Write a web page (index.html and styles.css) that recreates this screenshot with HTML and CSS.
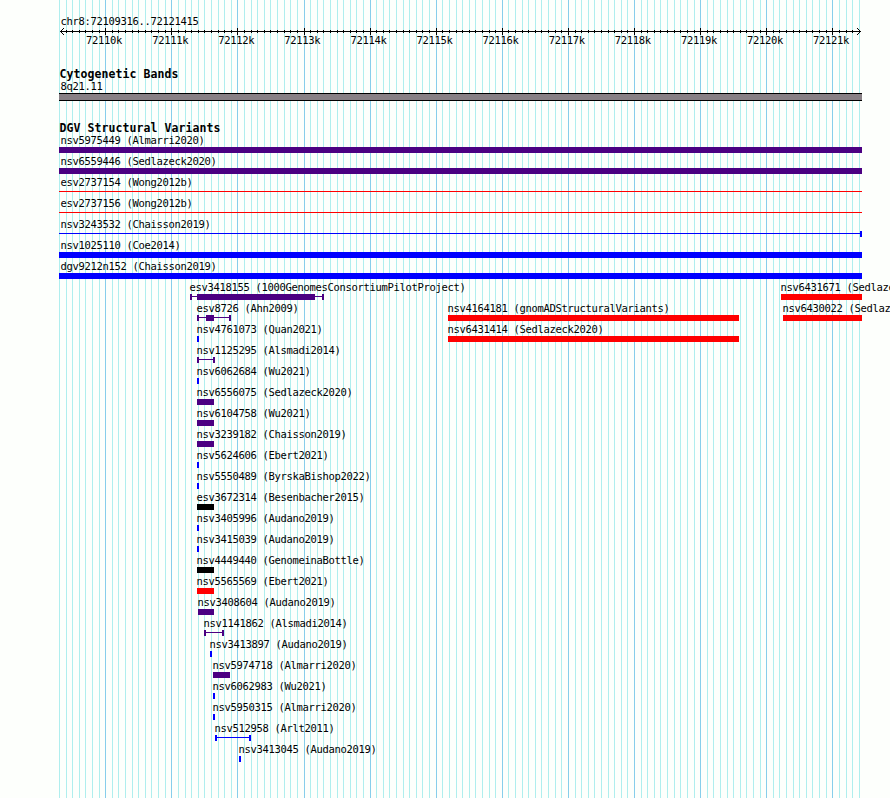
FILE: index.html
```html
<!DOCTYPE html>
<html lang="en">
<head>
<meta charset="utf-8">
<title>chr8:72109316..72121415</title>
<link rel="stylesheet" href="styles.css">
</head>
<body>
<main class="browser">
  <svg class="grid" width="890" height="798" aria-hidden="true"><path class="minor"/><path class="major"/></svg>
  <section class="ruler">
    <div class="region">chr8:72109316..72121415</div>
    <svg class="axis" width="890" height="9" aria-hidden="true"><path class="ticks"/><path class="heads" d="M60 4h801v1H60zM61 3h1v3h-1zM62 2h1v1h-1zM62 6h1v1h-1zM63 1h1v1h-1zM63 7h1v1h-1zM859 3h1v3h-1zM858 2h1v1h-1zM858 6h1v1h-1zM857 1h1v1h-1zM857 7h1v1h-1z"/></svg>
    <div class="scale"></div>
  </section>
  <section class="bands">
    <h2>Cytogenetic Bands</h2>
    <div class="band-name">8q21.11</div>
    <div class="band"></div>
  </section>
  <section class="variants">
    <h2>DGV Structural Variants</h2>
    <div class="rows"></div>
  </section>
</main>
<script src="script.js"></script>
</body>
</html>
```
FILE: styles.css
```css
* { box-sizing: border-box; }
body {
  margin: 0;
  background: #fdfffc;
  color: #000;
  font-family: "DejaVu Sans Mono", "Liberation Mono", monospace;
  font-size: 10.5px;
  line-height: 13px;
  letter-spacing: -0.321px;
}
.browser { position: relative; width: 890px; height: 798px; overflow: hidden; padding-top: 15px; }
.grid { position: absolute; left: 0; top: 0; z-index: -1; }
svg { display: block; shape-rendering: crispEdges; }
.minor { fill: #afeeee; }
.major { fill: #87ceeb; }
.region, .band-name { padding-left: 60.5px; white-space: pre; }
.region { height: 12px; }
.scale { display: flex; padding-left: 71px; height: 13px; margin-top: -2px; }
.scale span { flex: none; width: 66.1px; text-align: center; }
h2 {
  margin: 0;
  padding-left: 59.5px;
  height: 12px;
  font-size: 11.5px;
  line-height: 13px;
  font-weight: bold;
  letter-spacing: 0.077px;
}
.bands { margin-top: 21px; }
.band { width: 803px; height: 8px; margin-left: 59px; background: #888085; border: solid #000; border-width: 1px 0; }
.band-name { height: 13px; }
.variants { margin-top: 21px; }
.row { display: grid; height: 21px; }
.feature { grid-area: 1 / 1; width: max-content; margin-left: var(--x); }
.label { height: 13px; white-space: pre; margin-left: -0.5px; }
.wide .label { margin-left: 1.5px; }
.glyph { display: block; height: 6px; }
.purple { fill: #4b0082; }
.blue { fill: #00f; }
.red { fill: #f00; }
.black { fill: #000; }
```
FILE: script.js
```js
// Pixel column of a position, given in bases past 72,000,000
const column = (pos) => Math.round(60 + (pos - 109316) * 0.0661);

let minor = "", major = "", ticks = "";
for (let pos = 109300; pos <= 121400; pos += 100) {
  const x = column(pos);
  const isMajor = pos % 1000 === 0;
  if (isMajor) major += `M${x} 0h1v798h-1z`;
  else minor += `M${x} 0h1v798h-1z`;
  if (x > 62 && x < 858) ticks += isMajor ? `M${x} 1h1v7h-1z` : `M${x} 3h1v3h-1z`;
}
document.querySelector(".minor").setAttribute("d", minor);
document.querySelector(".major").setAttribute("d", major);
document.querySelector(".ticks").setAttribute("d", ticks);

const scale = document.querySelector(".scale");
for (let k = 72110; k <= 72121; k++) {
  const s = document.createElement("span");
  s.textContent = k + "k";
  scale.append(s);
}

// name, study, colour, start, end, shape, [block start, block end]
const rows = [
  [["nsv5975449", "Almarri2020", "purple", 59, 862, "bar"]],
  [["nsv6559446", "Sedlazeck2020", "purple", 59, 862, "bar"]],
  [["esv2737154", "Wong2012b", "red", 59, 862, "line"]],
  [["esv2737156", "Wong2012b", "red", 59, 862, "line"]],
  [["nsv3243532", "Chaisson2019", "blue", 59, 862, "endcap"]],
  [["nsv1025110", "Coe2014", "blue", 59, 862, "bar"]],
  [["dgv9212n152", "Chaisson2019", "blue", 59, 862, "bar"]],
  [["esv3418155", "1000GenomesConsortiumPilotProject", "purple", 190, 324, "span", 197, 315],
   ["nsv6431671", "Sedlazeck2020", "red", 781, 862, "bar"]],
  [["esv8726", "Ahn2009", "purple", 197, 231, "span", 206, 214],
   ["nsv4164181", "gnomADStructuralVariants", "red", 448, 739, "bar"],
   ["nsv6430022", "Sedlazeck2020", "red", 783, 862, "bar"]],
  [["nsv4761073", "Quan2021", "blue", 197, 199, "bar"],
   ["nsv6431414", "Sedlazeck2020", "red", 448, 739, "bar"]],
  [["nsv1125295", "Alsmadi2014", "purple", 197, 215, "span"]],
  [["nsv6062684", "Wu2021", "blue", 197, 199, "bar"]],
  [["nsv6556075", "Sedlazeck2020", "purple", 197, 214, "bar"]],
  [["nsv6104758", "Wu2021", "purple", 197, 214, "bar"]],
  [["nsv3239182", "Chaisson2019", "purple", 197, 214, "bar"]],
  [["nsv5624606", "Ebert2021", "blue", 197, 199, "bar"]],
  [["nsv5550489", "ByrskaBishop2022", "blue", 197, 199, "bar"]],
  [["esv3672314", "Besenbacher2015", "black", 197, 214, "bar"]],
  [["nsv3405996", "Audano2019", "blue", 197, 199, "bar"]],
  [["nsv3415039", "Audano2019", "blue", 197, 199, "bar"]],
  [["nsv4449440", "GenomeinaBottle", "black", 197, 214, "bar"]],
  [["nsv5565569", "Ebert2021", "red", 197, 214, "bar"]],
  [["nsv3408604", "Audano2019", "purple", 198, 214, "bar"]],
  [["nsv1141862", "Alsmadi2014", "purple", 204, 224, "span"]],
  [["nsv3413897", "Audano2019", "blue", 210, 212, "bar"]],
  [["nsv5974718", "Almarri2020", "purple", 213, 230, "bar"]],
  [["nsv6062983", "Wu2021", "blue", 213, 215, "bar"]],
  [["nsv5950315", "Almarri2020", "blue", 213, 215, "bar"]],
  [["nsv512958", "Arlt2011", "blue", 215, 251, "span"]],
  [["nsv3413045", "Audano2019", "blue", 239, 241, "bar"]],
];

const rect = (x, y, w, h) => `M${x} ${y}h${w}v${h}h${-w}z`;

function shapePath(shape, w, b0, b1) {
  const line = rect(0, 2, w, 1);
  const endcap = rect(w - 2, 0, 2, 6);
  if (shape === "bar") return rect(0, 0, w, 6);
  if (shape === "line") return line;
  if (shape === "endcap") return line + endcap;
  const block = b0 === undefined ? "" : rect(b0, 0, b1 - b0, 6);
  return line + rect(0, 0, 2, 6) + endcap + block;
}

document.querySelector(".rows").innerHTML = rows.map((row) =>
  `<div class="row">${row.map(([name, study, colour, x0, x1, shape, b0, b1]) => {
    const w = x1 - x0;
    const d = shapePath(shape, w, b0 === undefined ? b0 : b0 - x0, b1 - x0);
    return `<div class="feature${x0 === 59 ? " wide" : ""}" style="--x:${x0}px">` +
      `<div class="label">${name} (${study})</div>` +
      `<svg class="glyph" width="${w}" height="6"><path class="${colour}" d="${d}"/></svg></div>`;
  }).join("")}</div>`).join("");
```
